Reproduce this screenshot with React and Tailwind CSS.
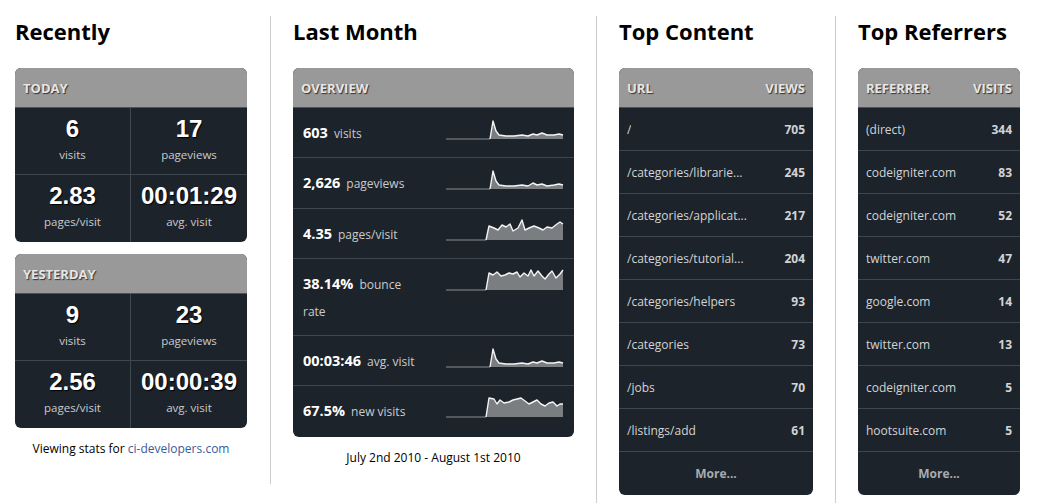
import React from "react";

const font = { fontFamily: '"Open Sans", "DejaVu Sans", sans-serif' };

const today = [
  ["6", "visits"],
  ["17", "pageviews"],
  ["2.83", "pages/visit"],
  ["00:01:29", "avg. visit"],
];
const yesterday = [
  ["9", "visits"],
  ["23", "pageviews"],
  ["2.56", "pages/visit"],
  ["00:00:39", "avg. visit"],
];

const spikeA = [[44,21],[47,3],[50,13],[53,17],[60,18],[68,18],[76,17],[82,18],[87,16],[91,17],[96,15],[101,17],[108,17],[113,16],[117,17]];
const spikeB = [[44,21],[47,3],[50,13],[53,17],[60,18],[68,18],[76,17],[82,18],[87,15],[91,17],[96,16],[101,18],[108,17],[113,16],[117,17]];
const wavyA = [[40,21],[43,7],[48,9],[52,11],[56,6],[60,8],[64,5],[67,12],[72,9],[76,1],[79,11],[83,9],[88,7],[93,9],[97,11],[101,8],[106,9],[111,5],[114,3],[117,5]];
const wavyB = [[40,21],[43,4],[47,6],[51,3],[55,7],[59,6],[63,4],[67,5],[71,3],[74,8],[78,4],[82,7],[85,1],[88,7],[92,2],[96,7],[99,10],[103,5],[106,2],[110,9],[114,5],[117,1]];
const wavyC = [[40,21],[43,2],[48,3],[51,8],[54,4],[58,7],[63,6],[67,4],[71,3],[75,2],[79,5],[83,8],[87,6],[91,4],[95,8],[99,10],[103,7],[107,6],[111,10],[114,8],[117,8]];

// row heights in px, border included
const overview = [
  ["603", "visits", spikeA, "h-[50px]"],
  ["2,626", "pageviews", spikeB, "h-[51px]"],
  ["4.35", "pages/visit", wavyA, "h-[50px]"],
  ["38.14%", "bounce rate", wavyB, "h-[77px]"],
  ["00:03:46", "avg. visit", spikeA, "h-[50px]"],
  ["67.5%", "new visits", wavyC, "h-[51px]"],
];

const content = [
  ["/", "705"],
  ["/categories/librarie...", "245"],
  ["/categories/applicat...", "217"],
  ["/categories/tutorial...", "204"],
  ["/categories/helpers", "93"],
  ["/categories", "73"],
  ["/jobs", "70"],
  ["/listings/add", "61"],
];

const referrers = [
  ["(direct)", "344"],
  ["codeigniter.com", "83"],
  ["codeigniter.com", "52"],
  ["twitter.com", "47"],
  ["google.com", "14"],
  ["twitter.com", "13"],
  ["codeigniter.com", "5"],
  ["hootsuite.com", "5"],
];

function Spark({ points }) {
  const start = points[0][0];
  const line = points.map((p) => p.join(",")).join(" ");
  const area = `${start},21 ${line} 117,21`;
  return (
    <svg width="118" height="22" viewBox="0 0 118 22" className="ml-auto mr-[10px] mt-[10px] shrink-0">
      <line x1="0" y1="21" x2={start} y2="21" stroke="#8a8d90" strokeWidth="1.2" />
      <polygon points={area} fill="#7b7e81" />
      <polyline points={line} fill="none" stroke="#f4f4f4" strokeWidth="1.4" strokeLinejoin="round" />
    </svg>
  );
}

function Header({ left, right }) {
  return (
    <div className="h-[40px] bg-[#999999] border-b border-[#4c535a] flex items-center justify-between px-[8px] pt-[2px] text-[13px] font-bold text-[#e6e6e6] [text-shadow:1px_1px_1px_#333]">
      <span>{left}</span>
      {right && <span>{right}</span>}
    </div>
  );
}

function Title({ children }) {
  return <h2 className="text-[22px] font-bold leading-[30px] text-black mb-[22px]">{children}</h2>;
}

function DayCard({ label, stats }) {
  return (
    <div className="rounded-[6px] overflow-hidden bg-[#1d232a] w-[232px]">
      <Header left={label} />
      <div className="grid grid-cols-2">
        {stats.map(([num, lbl], i) => (
          <div
            key={lbl}
            className={`h-[67px] flex flex-col items-center pt-[7px] ${i % 2 === 0 ? "border-r border-[#3e464e]" : ""} ${i < 2 ? "border-b border-[#3e464e]" : ""}`}
          >
            <span
              className="text-[24px] font-bold text-white leading-[28px] [text-shadow:1px_1px_1px_#000]"
              style={{ fontFamily: '"Liberation Sans", Arial, sans-serif' }}
            >
              {num}
            </span>
            <span className="text-[11.5px] text-[#c9cbcd] mt-[3px]">{lbl}</span>
          </div>
        ))}
      </div>
    </div>
  );
}

function ListCard({ head, rows, width }) {
  return (
    <div className={`rounded-[6px] overflow-hidden bg-[#1d232a] ${width}`}>
      <Header left={head[0]} right={head[1]} />
      {rows.map(([a, b], i) => (
        <div key={i} className="h-[43px] flex items-center justify-between px-[8px] pt-[2px] border-b border-[#3e464e] text-[12px] text-[#d2d4d6]">
          <span className="truncate">{a}</span>
          <span className="font-bold">{b}</span>
        </div>
      ))}
      <div className="h-[43px] flex items-center justify-center text-[12px] font-bold text-[#a9acaf]">More...</div>
    </div>
  );
}

export default function App() {
  return (
    <div className="flex items-start bg-white w-[1039px] h-[503px] overflow-hidden pl-[15px]" style={font}>
      <div className="mt-[16px] h-[468px] border-r border-[#cccccc] pr-[23px]">
        <Title>Recently</Title>
        <DayCard label="TODAY" stats={today} />
        <div className="h-[12px]" />
        <DayCard label="YESTERDAY" stats={yesterday} />
        <p className="text-center text-[12px] text-black mt-[12px]">
          Viewing stats for <span className="text-[#3b5a9a]">ci-developers.com</span>
        </p>
      </div>

      <div className="mt-[16px] h-[500px] border-r border-[#cccccc] px-[22px]">
        <Title>Last Month</Title>
        <div className="rounded-[6px] overflow-hidden bg-[#1d232a] w-[281px]">
          <Header left="OVERVIEW" />
          {overview.map(([num, lbl, pts, h], i) => (
            <div key={lbl} className={`flex items-start ${h} ${i < overview.length - 1 ? "border-b border-[#3e464e]" : ""}`}>
              <div className="w-[128px] pl-[10px] pt-[12px] leading-[27px] text-[12px] text-[#c9cbcd]">
                <span className="text-[14.5px] leading-[20px] font-bold text-white mr-[6px]">{num}</span>
                {lbl}
              </div>
              <Spark points={pts} />
            </div>
          ))}
        </div>
        <p className="text-center text-[12px] text-black mt-[12px]">July 2nd 2010 - August 1st 2010</p>
      </div>

      <div className="mt-[16px] h-[500px] border-r border-[#cccccc] px-[22px]">
        <Title>Top Content</Title>
        <ListCard head={["URL", "VIEWS"]} rows={content} width="w-[194px]" />
      </div>

      <div className="mt-[16px] pl-[22px]">
        <Title>Top Referrers</Title>
        <ListCard head={["REFERRER", "VISITS"]} rows={referrers} width="w-[162px]" />
      </div>
    </div>
  );
}
